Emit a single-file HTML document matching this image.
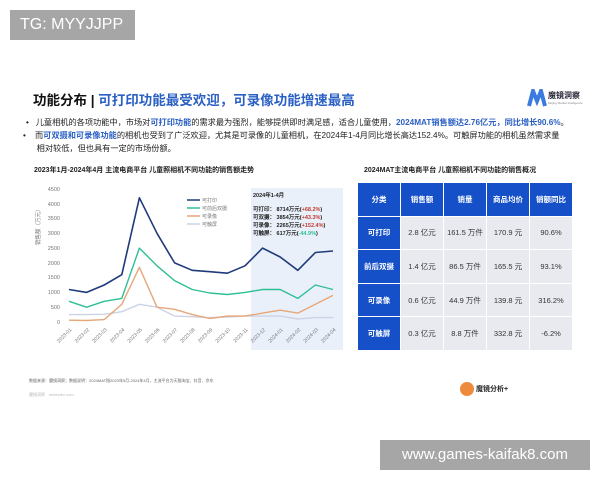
<!DOCTYPE html>
<html><head><meta charset="utf-8"><style>
*{margin:0;padding:0;box-sizing:border-box}
body{width:600px;height:480px;background:#fff;position:relative;overflow:hidden;font-family:"Liberation Sans","Noto Sans CJK SC",sans-serif;color:#222}
.a{position:absolute;white-space:nowrap}
.b{color:#2a5fc4;font-weight:bold}
table{border-collapse:collapse;position:absolute;left:357px;top:182px;width:216px;font-size:7.5px;text-align:center}
td{border:1px solid #fff;height:33.6px;background:#e8eaf0;color:#333;width:43px}
tr:first-child td,td:first-child{background:#1550c8;color:#fff;font-weight:bold}
</style></head><body>
<div class="a" style="left:10px;top:10px;width:125px;height:30px;background:#a6a6a6;color:#fff;font-size:16px;line-height:30px;padding-left:10px">TG: MYYJJPP</div>
<div class="a" style="left:33px;top:89px;font-size:13.5px;font-weight:bold;color:#111">功能分布 | <span style="color:#2a5fc4">可打印功能最受欢迎，可录像功能增速最高</span></div>
<svg class="a" style="left:527px;top:89px" width="20" height="18"><path d="M2 17 L6 2 L10 12 L14 2 L18 17" stroke="#3a7be0" stroke-width="4" fill="none"/></svg>
<div class="a" style="left:548px;top:90px;font-size:8px;font-weight:bold;color:#223">魔镜洞察</div>
<div class="a" style="left:548px;top:101px;font-size:3px;color:#888">Mojing Market Intelligence</div>
<div class="a" style="left:26px;top:117px;font-size:8.2px;line-height:12.5px">•&nbsp;&nbsp;&nbsp;儿童相机的各项功能中，市场对<span class="b">可打印功能</span>的需求最为强烈，能够提供即时满足感，适合儿童使用，<span class="b">2024MAT销售额达2.76亿元，同比增长90.6%</span>。</div>
<div class="a" style="left:23px;top:130px;font-size:8.2px;line-height:12.5px">•&nbsp;&nbsp;&nbsp;&nbsp;而<span class="b">可双摄和可录像功能</span>的相机也受到了广泛欢迎，尤其是可录像的儿童相机，在2024年1-4月同比增长高达152.4%。可触屏功能的相机虽然需求量<br>&nbsp;&nbsp;&nbsp;&nbsp;&nbsp;&nbsp;相对较低，但也具有一定的市场份额。</div>
<div class="a" style="left:34px;top:165px;font-size:7px;font-weight:bold">2023年1月-2024年4月 主流电商平台 儿童照相机不同功能的销售额走势</div>
<div class="a" style="left:364px;top:165px;font-size:7px;font-weight:bold">2024MAT主流电商平台 儿童照相机不同功能的销售概况</div>
<svg class="a" style="left:0;top:180px" width="350" height="180" viewBox="0 180 350 180" font-family="Liberation Sans" font-size="5.5" fill="#777">
<rect x="251" y="188" width="92" height="162" fill="#eaf0fa"/>
<g text-anchor="end"><text x="60" y="191">4500</text><text x="60" y="206">4000</text><text x="60" y="220">3500</text><text x="60" y="235">3000</text><text x="60" y="250">2500</text><text x="60" y="265">2000</text><text x="60" y="279">1500</text><text x="60" y="294">1000</text><text x="60" y="309">500</text><text x="60" y="324">0</text></g>
<text x="40" y="245" transform="rotate(-90 40 245)">销售额（万元）</text>
<g stroke-linejoin="round" fill="none" stroke-width="1.4">
<polyline stroke="#ccd3e6" points="69,314.6 86.6,314.6 104.2,314.3 121.8,311.7 139.4,304.3 157,307.2 174.6,316.1 192.2,316.7 209.8,317.6 227.4,317 245,316.1 262.6,316.1 280.2,316.1 297.8,319 315.4,317.6 333,317.6"/>
<polyline stroke="#e6a77a" points="69,320.2 86.6,320.5 104.2,319.6 121.8,304.3 139.4,267.3 157,307.2 174.6,309.3 192.2,314.6 209.8,318.5 227.4,316.1 245,316.1 262.6,313.1 280.2,310.2 297.8,313.1 315.4,304.3 333,295.4"/>
<polyline stroke="#2fbf95" points="69,301.3 86.6,307.2 104.2,301.3 121.8,298.4 139.4,248.1 157,265.8 174.6,280.6 192.2,289.5 209.8,293 227.4,294.5 245,292.4 262.6,289.5 280.2,289.5 297.8,298.4 315.4,285 333,289.5"/>
<polyline stroke="#1f3b7a" stroke-width="1.6" points="69,289.5 86.6,292.4 104.2,285 121.8,274.7 139.4,197.8 157,233.3 174.6,262.9 192.2,270.3 209.8,271.7 227.4,273.2 245,265.8 262.6,248.1 280.2,257 297.8,270.3 315.4,252.5 333,251"/>
</g>
<g stroke-width="1.5"><line x1="187" y1="200" x2="200" y2="200" stroke="#1f3b7a"/><line x1="187" y1="208" x2="200" y2="208" stroke="#2fbf95"/><line x1="187" y1="216" x2="200" y2="216" stroke="#e6a77a"/><line x1="187" y1="224" x2="200" y2="224" stroke="#ccd3e6"/></g>
<g font-size="5"><text x="202" y="202">可打印</text><text x="202" y="210">可前后双摄</text><text x="202" y="218">可录像</text><text x="202" y="226">可触屏</text></g>
<g font-size="5.5" fill="#222" font-weight="bold"><text x="253" y="197">2024年1-4月</text>
<text x="253" y="211">可打印： 8714万元(<tspan fill="#c0392b">+68.2%</tspan>)</text>
<text x="253" y="219">可双摄： 3854万元(<tspan fill="#c0392b">+43.3%</tspan>)</text>
<text x="253" y="227">可录像： 2265万元(<tspan fill="#c0392b">+152.4%</tspan>)</text>
<text x="253" y="235">可触屏： 617万元(<tspan fill="#2fbf95">-44.9%</tspan>)</text></g>
<g font-size="5" text-anchor="end">
<text transform="translate(72,330) rotate(-45)">2023-01</text><text transform="translate(89.6,330) rotate(-45)">2023-02</text><text transform="translate(107.2,330) rotate(-45)">2023-03</text><text transform="translate(124.8,330) rotate(-45)">2023-04</text><text transform="translate(142.4,330) rotate(-45)">2023-05</text><text transform="translate(160,330) rotate(-45)">2023-06</text><text transform="translate(177.6,330) rotate(-45)">2023-07</text><text transform="translate(195.2,330) rotate(-45)">2023-08</text><text transform="translate(212.8,330) rotate(-45)">2023-09</text><text transform="translate(230.4,330) rotate(-45)">2023-10</text><text transform="translate(248,330) rotate(-45)">2023-11</text><text transform="translate(265.6,330) rotate(-45)">2023-12</text><text transform="translate(283.2,330) rotate(-45)">2024-01</text><text transform="translate(300.8,330) rotate(-45)">2024-02</text><text transform="translate(318.4,330) rotate(-45)">2024-03</text><text transform="translate(336,330) rotate(-45)">2024-04</text></g>
</svg>
<table>
<tr><td>分类</td><td>销售额</td><td>销量</td><td>商品均价</td><td>销额同比</td></tr>
<tr><td>可打印</td><td>2.8 亿元</td><td>161.5 万件</td><td>170.9 元</td><td>90.6%</td></tr>
<tr><td>前后双摄</td><td>1.4 亿元</td><td>86.5 万件</td><td>165.5 元</td><td>93.1%</td></tr>
<tr><td>可录像</td><td>0.6 亿元</td><td>44.9 万件</td><td>139.8 元</td><td>316.2%</td></tr>
<tr><td>可触屏</td><td>0.3 亿元</td><td>8.8 万件</td><td>332.8 元</td><td>-6.2%</td></tr>
</table>
<div class="a" style="left:29px;top:378px;font-size:4px;color:#666">数据来源：魔镜洞察；数据说明：2024MAT指2023年5月-2024年4月，主流平台为天猫淘宝、抖音、京东</div>
<div class="a" style="left:29px;top:392px;font-size:4px;color:#bbb">魔镜洞察　mktindex.com</div>
<div class="a" style="left:460px;top:382px;width:14px;height:14px;border-radius:50%;background:#ee8a3c"></div>
<div class="a" style="left:476px;top:384px;font-size:7px;font-weight:bold">魔镜分析+</div>
<div class="a" style="left:380px;top:440px;width:210px;height:30px;background:#a6a6a6;color:#fff;font-size:15px;line-height:30px;text-align:center">www.games-kaifak8.com</div>
</body></html>
